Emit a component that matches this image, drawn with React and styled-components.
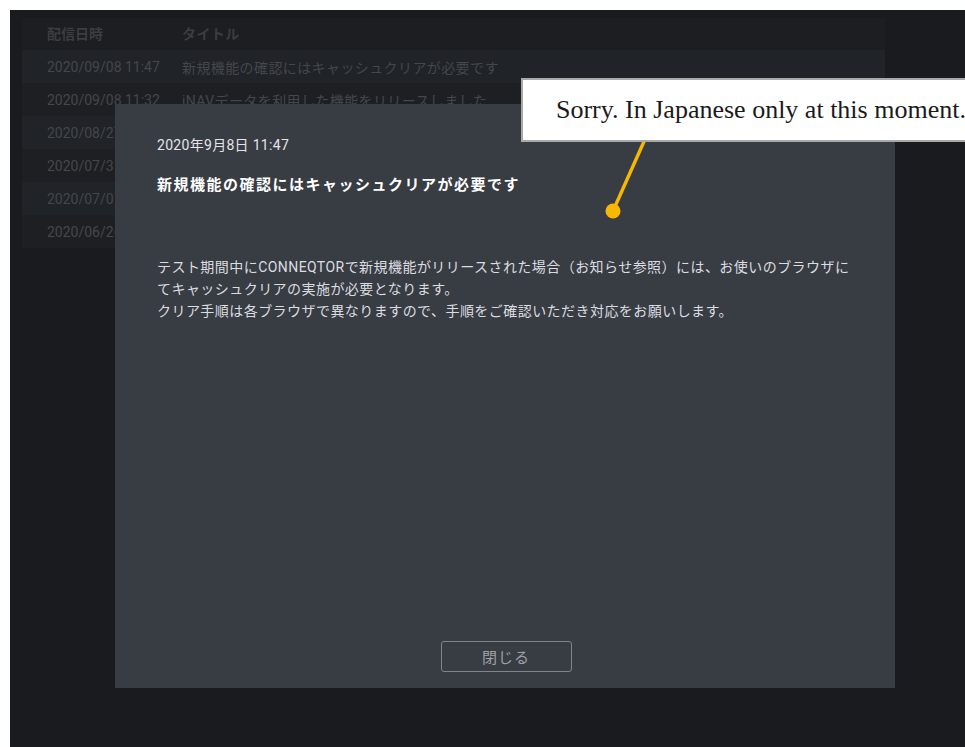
import React from 'react';
import styled, { createGlobalStyle } from 'styled-components';

const GlobalStyle = createGlobalStyle`
  html, body {
    margin: 0;
    height: 100%;
    background: #ffffff;
    overflow: hidden;
  }
  body {
    font-family: Roboto, "Noto Sans CJK JP", sans-serif;
  }
  #root {
    height: 100%;
  }
`;

const notices = [
  { date: '2020/09/08 11:47', title: '新規機能の確認にはキャッシュクリアが必要です' },
  { date: '2020/09/08 11:32', title: 'iNAVデータを利用した機能をリリースしました' },
  { date: '2020/08/27 10:00', title: '夏季休業期間のサポート対応について' },
  { date: '2020/07/31 18:00', title: '一部機能のメンテナンスを実施しました' },
  { date: '2020/07/01 09:00', title: 'テスト期間の延長について' },
  { date: '2020/06/26 15:30', title: 'CONNEQTORのテスト提供を開始しました' },
];

function App() {
  return (
    <>
      <GlobalStyle />
      <Frame>
        <Screen>
          <NoticeTable>
            <HeadRow>
              <DateCell>配信日時</DateCell>
              <TitleCell>タイトル</TitleCell>
            </HeadRow>
            {notices.map((n, i) => (
              <Row key={n.date} odd={i % 2 === 0}>
                <DateCell>{n.date}</DateCell>
                <TitleCell>{n.title}</TitleCell>
              </Row>
            ))}
          </NoticeTable>

          <Modal>
            <ModalDate>2020年9月8日 11:47</ModalDate>
            <ModalTitle>新規機能の確認にはキャッシュクリアが必要です</ModalTitle>
            <ModalBody>
              テスト期間中にCONNEQTORで新規機能がリリースされた場合（お知らせ参照）には、お使いのブラウザにてキャッシュクリアの実施が必要となります。
              <br />
              クリア手順は各ブラウザで異なりますので、手順をご確認いただき対応をお願いします。
            </ModalBody>
            <CloseButton>閉じる</CloseButton>
          </Modal>
        </Screen>

        <Pointer width="60" height="100" viewBox="0 0 60 100">
          <line x1="45" y1="2" x2="12" y2="76" stroke="#f8b800" strokeWidth="3.4" />
          <circle cx="12" cy="76" r="7.5" fill="#f8b800" />
        </Pointer>
        <Callout>Sorry. In Japanese only at this moment.</Callout>
      </Frame>
    </>
  );
}

export default App;

const Frame = styled.div`
  position: relative;
  height: 100%;
  padding: 10px 0 0 10px;
  box-sizing: border-box;
`;

const Screen = styled.div`
  position: relative;
  height: 100%;
  background: #1a1b1e;
  padding: 8px 80px 0 12px;
  box-sizing: border-box;
`;

const NoticeTable = styled.div`
  display: flex;
  flex-direction: column;
  background: #1c1e21;
`;

const HeadRow = styled.div`
  display: flex;
  align-items: center;
  height: 32px;
  padding-left: 25px;
  padding-bottom: 2px;
  box-sizing: border-box;
  font-size: 14px;
  font-weight: 700;
  color: #3a3d42;
`;

const Row = styled.div`
  display: flex;
  align-items: center;
  height: 33px;
  padding-left: 25px;
  font-size: 14px;
  color: #44474c;
  background: ${(p) => (p.odd ? '#202327' : '#1d1f22')};
`;

const DateCell = styled.div`
  width: 135px;
  flex-shrink: 0;
`;

const TitleCell = styled.div`
  flex: 1;
  letter-spacing: 0.4px;
  white-space: nowrap;
`;

const Modal = styled.div`
  position: absolute;
  left: 105px;
  top: 94px;
  width: 780px;
  height: 584px;
  box-sizing: border-box;
  padding: 32px 40px 16px 42px;
  background: #383c43;
  display: flex;
  flex-direction: column;
`;

const ModalDate = styled.div`
  font-size: 14px;
  letter-spacing: 0.3px;
  color: #e4e5e7;
  line-height: 18px;
`;

const ModalTitle = styled.div`
  margin-top: 21px;
  font-size: 15px;
  font-weight: 700;
  letter-spacing: 1.5px;
  color: #ffffff;
  line-height: 20px;
`;

const ModalBody = styled.div`
  margin-top: 61px;
  font-size: 14px;
  letter-spacing: 0.45px;
  line-height: 22px;
  color: #dcdde0;
`;

const CloseButton = styled.button`
  margin: auto auto 0 auto;
  width: 131px;
  height: 31px;
  background: transparent;
  border: 1px solid #80858c;
  border-radius: 3px;
  font-family: Roboto, "Noto Sans CJK JP", sans-serif;
  font-size: 15px;
  letter-spacing: 1px;
  color: #9da1a8;
  cursor: pointer;
`;

const Callout = styled.div`
  position: absolute;
  left: 521px;
  top: 78px;
  width: 470px;
  height: 64px;
  box-sizing: border-box;
  padding-left: 33px;
  display: flex;
  align-items: center;
  background: #ffffff;
  border: 2px solid #a9a9a9;
  font-family: "Liberation Serif", serif;
  font-size: 26px;
  color: #1a1a1a;
  white-space: nowrap;
`;

const Pointer = styled.svg`
  position: absolute;
  left: 601px;
  top: 135px;
`;
